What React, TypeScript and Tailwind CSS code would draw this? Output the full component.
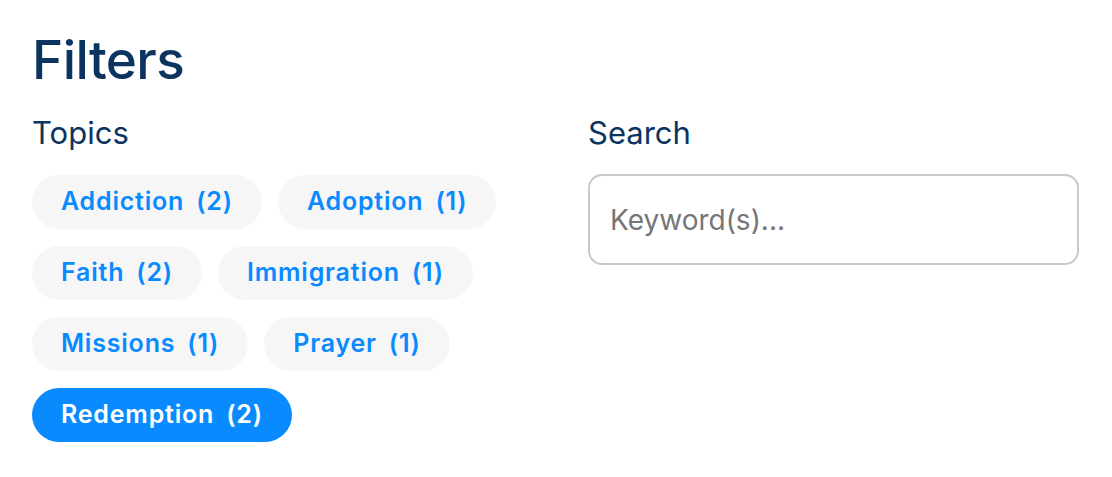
import React from "react";

const topics = [
  { name: "Addiction", count: 2 },
  { name: "Adoption", count: 1 },
  { name: "Faith", count: 2 },
  { name: "Immigration", count: 1 },
  { name: "Missions", count: 1 },
  { name: "Prayer", count: 1 },
  { name: "Redemption", count: 2, active: true },
];

export default function App() {
  return (
    <div
      className="w-[1112px] h-[477px] bg-white px-8 pt-[28px] text-[#0c3461]"
      style={{ fontFamily: "Inter, 'Noto Sans', sans-serif" }}
    >
      <h1 className="text-[53px] leading-[64px] font-medium tracking-[-0.6px]">Filters</h1>
      <div className="grid grid-cols-[524px_1fr] gap-8 mt-[21px]">
        <div>
          <h2 className="text-[31px] leading-[40px] font-normal">Topics</h2>
          <div className="flex flex-wrap gap-x-4 gap-y-[17px] mt-[22px] w-[480px]">
            {topics.map((t) => (
              <button
                key={t.name}
                className={
                  "h-[54px] rounded-full px-[29px] text-[25px] font-semibold tracking-[0.8px] flex items-center " +
                  (t.active ? "bg-[#0a8aff] text-white" : "bg-[#f6f6f6] text-[#0a8aff]")
                }
              >
                <span>{t.name}</span>
                <span className="ml-[12px]">({t.count})</span>
              </button>
            ))}
          </div>
        </div>
        <div>
          <h2 className="text-[31px] leading-[40px] font-normal">Search</h2>
          <input
            type="text"
            placeholder="Keyword(s)..."
            className="mt-[21px] w-[491px] h-[91px] rounded-[14px] border-2 border-[#c8c9cb] px-[20px] text-[28px] text-[#333] placeholder:text-[#767676] outline-none"
          />
        </div>
      </div>
    </div>
  );
}
